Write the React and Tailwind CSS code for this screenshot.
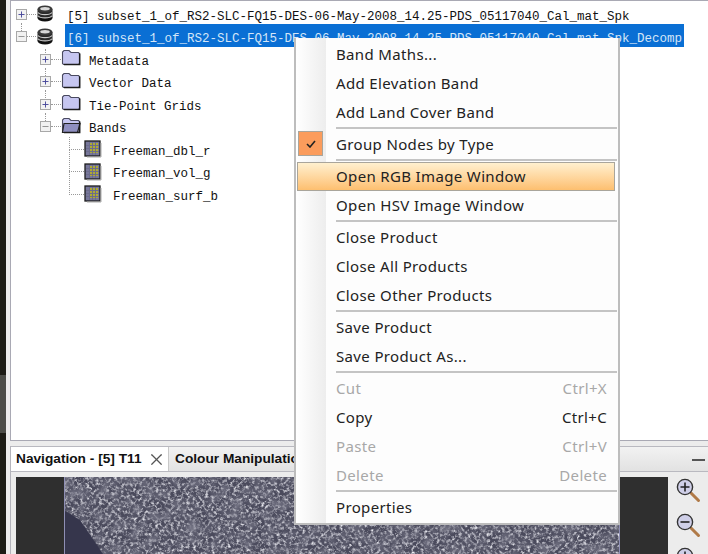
import { Plus, Minus, X } from 'lucide-react'

const ProductIcon = () => (
  <svg width="18" height="17" viewBox="0 0 18 17" className="shrink-0 mb-[7px]">
    <ellipse cx="9" cy="13" rx="7.5" ry="3.5" fill="#111" />
    <rect x="1.5" y="4" width="15" height="9" fill="#2a2a2a" />
    <ellipse cx="9" cy="4" rx="7.5" ry="3.5" fill="#3a3a3a" />
    <ellipse cx="9" cy="3.8" rx="4.8" ry="1.7" fill="#d8d8d8" />
    <path d="M2 7.5c2 2.8 12 2.8 14 0M2 10.8c2 2.8 12 2.8 14 0" fill="none" stroke="#c8c8c8" strokeWidth="1.1" />
  </svg>
)

const FolderIcon = ({ open }) => (
  <svg width="20" height="17" viewBox="0 0 20 17" className="shrink-0 mb-[9px]">
    <path d="M1.5 14.5V3L3 1.5h5l2 2h7.5l1 1v10l-1 1h-15z" fill="#c6c6f0" stroke="#4a4a60" strokeWidth="1.1" />
    {open && <path d="M3 6.500h16l-2.5 9h-15z" fill="#8f8fc0" stroke="#222" strokeWidth="1.2" />}
    <path d="M18.7 4.500v11H3" fill="none" stroke="#1c1c1c" strokeWidth="1.5" />
  </svg>
)

const BandIcon = () => (
  <svg width="18" height="18" viewBox="0 0 18 18" className="shrink-0 mb-[6px]">
    <rect x="1" y="1" width="15" height="15" fill="#77779a" stroke="#1c1c1c" strokeWidth="1.3" />
    <rect x="5" y="3" width="9" height="10" fill="#b0ac30" />
    <path d="M2 5.500h13M2 8.500h13M2 11.500h13M5.500 2v13M8.500 2v13M11.500 2v13" stroke="#6c6c8c" strokeWidth="1" />
    <path d="M17 3v14H3" fill="none" stroke="#aaa" strokeWidth="1" />
  </svg>
)

const Toggle = ({ open }) => (
  <span className="relative z-10 w-[11px] h-[11px] mb-[6px] shrink-0 bg-[#f2f2f2] border border-[#a8a8a8] flex items-center justify-center">
    {open
      ? <Minus size={9} strokeWidth={2} className="text-[#777]" />
      : <Plus size={9} strokeWidth={2.5} className="text-[#46469a]" />}
  </span>
)

const TreeRow = ({ indent, toggle, open, icon, gap, leader, label, selected, stem }) => (
  <div className={`relative h-[22.5px] flex items-center ${indent}`}>
    {stem && <span className={`absolute border-l border-dotted border-[#999] ${stem}`} />}
    {toggle && <Toggle open={open} />}
    <span className={`${leader} mb-[6px] border-t border-dotted border-[#999] shrink-0`} />
    {icon}
    <span className={`font-['Liberation_Mono',monospace] text-[12.5px] whitespace-pre ${gap} ${selected ? 'bg-[#0a6fd4] text-[#d5e6f8] h-[23px] leading-[30px] mb-[8px] pl-[2px] pr-[2px]' : 'text-[#111]'}`}>
      {label}
    </span>
  </div>
)

const MenuItem = ({ label, shortcut, disabled, check, active }) => (
  <div className={`relative h-[29px] flex items-center justify-between pr-[11px] ${disabled ? 'text-[#a8a8a8]' : 'text-[#222]'} ${active ? 'pl-[38px] mr-[3px] border border-[#a9a59b] bg-gradient-to-b from-[#fff0cf] to-[#fdbf6f]' : 'pl-[39px]'}`}>
    {check && (
      <span className="absolute left-[1px] top-[1px] w-[25px] h-[25px] border border-[#a9a59b] bg-[#fb9c5c] flex items-center justify-center">
        <svg width="10" height="8" viewBox="0 0 10 8"><path d="M1 4l3 3 5-6" fill="none" stroke="#222" strokeWidth="1.6" /></svg>
      </span>
    )}
    <span>{label}</span>
    {shortcut && <span>{shortcut}</span>}
  </div>
)

const Sep = () => <div className="h-[2px] mb-[1px] ml-[39px] mr-[1px] bg-[#c4c4c4]" />

const ZoomIcon = ({ minus }) => (
  <svg width="26" height="26" viewBox="0 0 26 26" className="shrink-0">
    <path d="M15 15l7.500 7.500" stroke="#b07a48" strokeWidth="3" strokeLinecap="round" />
    <circle cx="9" cy="9" r="7.600" fill="#cfcfe8" stroke="#333" strokeWidth="1.4" />
    <path d={minus ? 'M4.500 9h9' : 'M4.500 9h9M9 4.500v9'} stroke="#222" strokeWidth="1.6" />
  </svg>
)

// speckled radar image, the one bit that has to be noise
const RadarImage = () => (
  <svg className="w-full h-full block" preserveAspectRatio="none">
    <filter id="mottle" x="0" y="0" width="100%" height="100%">
      <feTurbulence type="fractalNoise" baseFrequency="0.09" numOctaves="2" seed="11" />
      <feColorMatrix values="0 0 0 0 0.2  0 0 0 0 0.2  0 0 0 0 0.26  1.6 0 0 0 -0.6" />
    </filter>
    <filter id="speckle" x="0" y="0" width="100%" height="100%">
      <feTurbulence type="fractalNoise" baseFrequency="0.32" numOctaves="3" seed="7" />
      <feColorMatrix values="0 0 0 0 0.82  0 0 0 0 0.82  0 0 0 0 0.87  2.6 0 0 0 -1.15" />
      <feGaussianBlur stdDeviation="0.5" />
    </filter>
    <rect width="100%" height="100%" fill="#4a4a5c" />
    <rect width="100%" height="100%" filter="url(#speckle)" />
    <rect width="100%" height="100%" filter="url(#mottle)" />
    <path d="M0 34L15 43L38 77H0z" fill="#36364c" />
  </svg>
)

export default function App() {
  return (
    <div className="relative w-[708px] h-[554px] overflow-hidden bg-[#1c1c16] font-['Noto_Sans',sans-serif]">
      {/* lighter bit of the window behind */}
      <div className="absolute left-0 top-[375px] w-[6px] h-[58px] bg-[#4c4d48]" />

      <div className="ml-[6px] pl-[4px] h-full flex flex-col bg-[#ececec]">
        {/* product tree */}
        <div className="h-[441px] shrink-0 bg-white border border-[#a9a9b4] border-r-0 pt-[5px] mb-[5px]">
          <TreeRow indent="pl-[5px]" toggle leader="w-[9px]" gap="ml-[13px]" icon={<ProductIcon />} label="[5] subset_1_of_RS2-SLC-FQ15-DES-06-May-2008_14.25-PDS_05117040_Cal_mat_Spk" />
          <TreeRow indent="pl-[5px]" toggle open leader="w-[9px]" gap="ml-[11px]" stem="left-[10px] -top-[6px] h-[14px]" icon={<ProductIcon />} selected label="[6] subset_1_of_RS2-SLC-FQ15-DES-06-May-2008_14.25-PDS_05117040_Cal_mat_Spk_Decomp" />
          <TreeRow indent="pl-[29px]" toggle leader="w-[10px]" gap="ml-[8px]" stem="left-[34px] -top-[2px] h-[10px]" icon={<FolderIcon />} label="Metadata" />
          <TreeRow indent="pl-[29px]" toggle leader="w-[10px]" gap="ml-[8px]" stem="left-[34px] -top-[6px] h-[14px]" icon={<FolderIcon />} label="Vector Data" />
          <TreeRow indent="pl-[29px]" toggle leader="w-[10px]" gap="ml-[8px]" stem="left-[34px] -top-[6px] h-[14px]" icon={<FolderIcon />} label="Tie-Point Grids" />
          <TreeRow indent="pl-[29px]" toggle open leader="w-[10px]" gap="ml-[8px]" stem="left-[34px] -top-[6px] h-[14px]" icon={<FolderIcon open />} label="Bands" />
          <TreeRow indent="pl-[58px]" leader="w-[15px]" gap="ml-[11px]" stem="left-[58px] -top-[4px] h-[13px]" icon={<BandIcon />} label="Freeman_dbl_r" />
          <TreeRow indent="pl-[58px]" leader="w-[15px]" gap="ml-[11px]" stem="left-[58px] -top-[14px] h-[23px]" icon={<BandIcon />} label="Freeman_vol_g" />
          <TreeRow indent="pl-[58px]" leader="w-[15px]" gap="ml-[11px]" stem="left-[58px] -top-[14px] h-[23px]" icon={<BandIcon />} label="Freeman_surf_b" />
        </div>

        {/* navigation panel */}
        <div className="flex-1 flex flex-col min-h-0 border-l border-[#b4b4bc]">
          <div className="h-[26px] shrink-0 flex items-stretch font-['Liberation_Sans',sans-serif] font-bold text-[13.7px] text-[#111] border-t border-b border-[#b9b9c0]">
            <div className="w-[158px] shrink-0 bg-white flex items-center pl-[5px] pt-[1px] gap-[5px] border-r border-[#c8c8c8]">
              Navigation - [5] T11
              <X size={19} strokeWidth={1.5} className="text-[#555] shrink-0" />
            </div>
            <div className="flex-1 bg-gradient-to-b from-[#f2f2f2] to-[#e2e2e2] flex items-center justify-between pl-[6px] pr-[3px] pt-[1px]">
              <span>Colour Manipulation</span>
              <span className="w-[13px] h-[2px] bg-[#555]" />
            </div>
          </div>
          <div className="flex-1 flex min-h-0 pt-[5px] pl-[5px]">
            <div className="w-[48px] bg-[#2f2f2f] shrink-0" />
            <div className="flex-1 border-l border-r border-[#8f8fb4] min-w-0">
              <RadarImage />
            </div>
            <div className="w-[48px] bg-[#2f2f2f] shrink-0" />
            <div className="w-[40px] shrink-0 flex flex-col items-start gap-[8.5px] pl-[8px] mt-[1px]">
              <ZoomIcon />
              <ZoomIcon minus />
              <ZoomIcon />
            </div>
          </div>
        </div>
      </div>

      {/* context menu */}
      <div className="absolute left-[294px] top-[38px] w-[326px] h-[487px] bg-[#fdfdfd] border-2 border-[#bdbdbd] border-t-0 pt-[2px] pl-[1px] text-[15px] tracking-[0.35px]">
        <div className="absolute left-0 top-0 bottom-0 w-[30px] bg-gradient-to-r from-white to-[#ededed]" />
        <div className="relative">
          <MenuItem label="Band Maths..." />
          <MenuItem label="Add Elevation Band" />
          <MenuItem label="Add Land Cover Band" />
          <Sep />
          <MenuItem label="Group Nodes by Type" check />
          <Sep />
          <MenuItem label="Open RGB Image Window" active />
          <MenuItem label="Open HSV Image Window" />
          <Sep />
          <MenuItem label="Close Product" />
          <MenuItem label="Close All Products" />
          <MenuItem label="Close Other Products" />
          <Sep />
          <MenuItem label="Save Product" />
          <MenuItem label="Save Product As..." />
          <Sep />
          <MenuItem label="Cut" shortcut="Ctrl+X" disabled />
          <MenuItem label="Copy" shortcut="Ctrl+C" />
          <MenuItem label="Paste" shortcut="Ctrl+V" disabled />
          <MenuItem label="Delete" shortcut="Delete" disabled />
          <Sep />
          <MenuItem label="Properties" />
        </div>
      </div>
    </div>
  )
}
